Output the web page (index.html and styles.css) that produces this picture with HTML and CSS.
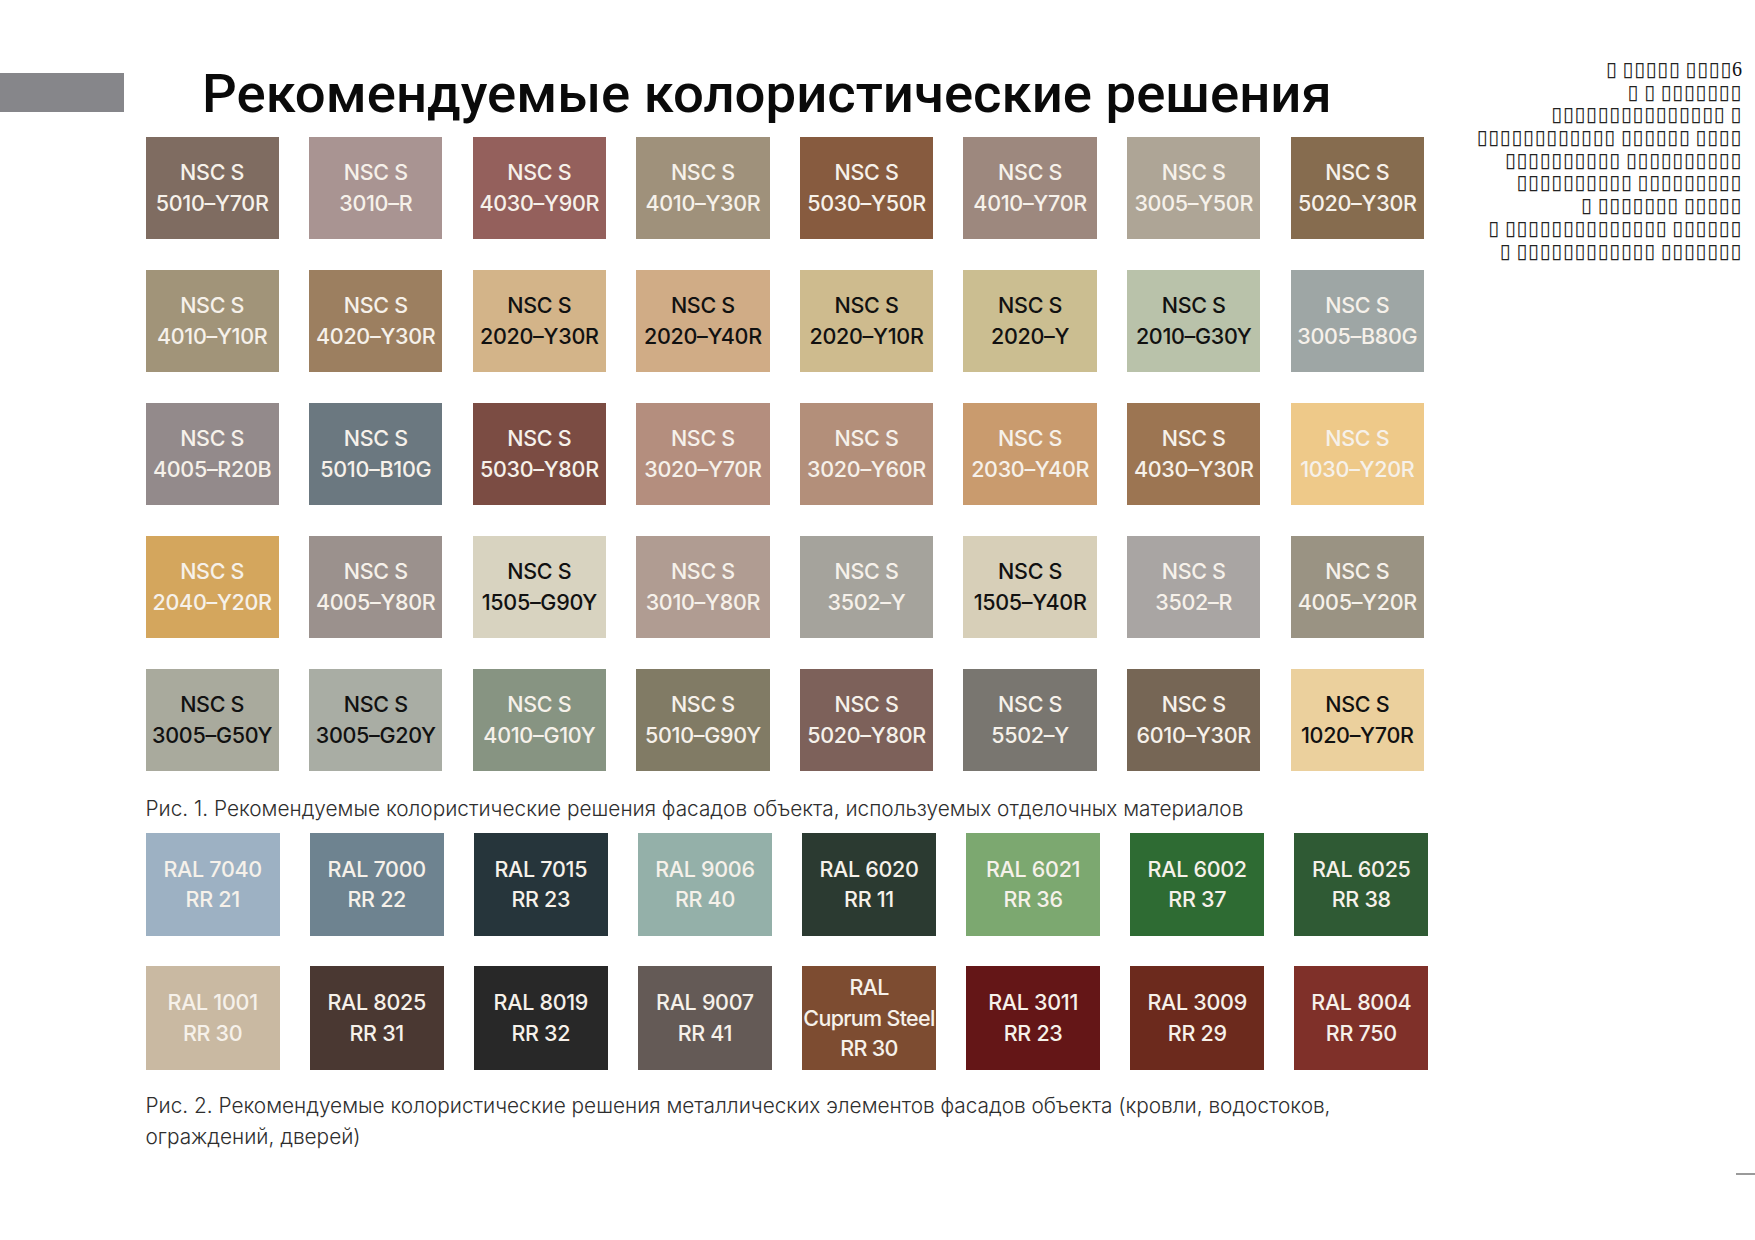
FILE: index.html
```html
<!DOCTYPE html>
<html lang="ru">
<head>
<meta charset="utf-8">
<title>Рекомендуемые колористические решения</title>
<link rel="stylesheet" href="styles.css">
</head>
<body>
<div class="page">
  <div class="main">
    <header class="header">
      <div class="tab"></div>
      <h1 class="title">Рекомендуемые колористические решения</h1>
    </header>

    <div class="grid nsc">
      <div class="sw" style="background:#7f6c61">NSC S<br>5010–Y70R</div>
      <div class="sw" style="background:#a99492">NSC S<br>3010–R</div>
      <div class="sw" style="background:#94605c">NSC S<br>4030–Y90R</div>
      <div class="sw" style="background:#9f917b">NSC S<br>4010–Y30R</div>
      <div class="sw" style="background:#875b3f">NSC S<br>5030–Y50R</div>
      <div class="sw" style="background:#9d887e">NSC S<br>4010–Y70R</div>
      <div class="sw" style="background:#aea596">NSC S<br>3005–Y50R</div>
      <div class="sw" style="background:#866c4f">NSC S<br>5020–Y30R</div>

      <div class="sw" style="background:#a19479">NSC S<br>4010–Y10R</div>
      <div class="sw" style="background:#9c7f60">NSC S<br>4020–Y30R</div>
      <div class="sw dark" style="background:#d3b489">NSC S<br>2020–Y30R</div>
      <div class="sw dark" style="background:#d0ac86">NSC S<br>2020–Y40R</div>
      <div class="sw dark" style="background:#cebb8e">NSC S<br>2020–Y10R</div>
      <div class="sw dark" style="background:#cbbe91">NSC S<br>2020–Y</div>
      <div class="sw dark" style="background:#b9c2aa">NSC S<br>2010–G30Y</div>
      <div class="sw" style="background:#9ea6a5">NSC S<br>3005–B80G</div>

      <div class="sw" style="background:#938a8b">NSC S<br>4005–R20B</div>
      <div class="sw" style="background:#6b7880">NSC S<br>5010–B10G</div>
      <div class="sw" style="background:#7b4c43">NSC S<br>5030–Y80R</div>
      <div class="sw" style="background:#b48e7e">NSC S<br>3020–Y70R</div>
      <div class="sw" style="background:#b38f7a">NSC S<br>3020–Y60R</div>
      <div class="sw" style="background:#c99b6e">NSC S<br>2030–Y40R</div>
      <div class="sw" style="background:#9c7552">NSC S<br>4030–Y30R</div>
      <div class="sw" style="background:#eec989">NSC S<br>1030–Y20R</div>

      <div class="sw" style="background:#d4a65d">NSC S<br>2040–Y20R</div>
      <div class="sw" style="background:#9b918d">NSC S<br>4005–Y80R</div>
      <div class="sw dark" style="background:#d8d3c0">NSC S<br>1505–G90Y</div>
      <div class="sw" style="background:#b09c92">NSC S<br>3010–Y80R</div>
      <div class="sw" style="background:#a5a39c">NSC S<br>3502–Y</div>
      <div class="sw dark" style="background:#d7cfb8">NSC S<br>1505–Y40R</div>
      <div class="sw" style="background:#a9a5a3">NSC S<br>3502–R</div>
      <div class="sw" style="background:#9a9383">NSC S<br>4005–Y20R</div>

      <div class="sw dark" style="background:#a9aa9d">NSC S<br>3005–G50Y</div>
      <div class="sw dark" style="background:#a9ada4">NSC S<br>3005–G20Y</div>
      <div class="sw" style="background:#879482">NSC S<br>4010–G10Y</div>
      <div class="sw" style="background:#817b65">NSC S<br>5010–G90Y</div>
      <div class="sw" style="background:#7d615a">NSC S<br>5020–Y80R</div>
      <div class="sw" style="background:#797670">NSC S<br>5502–Y</div>
      <div class="sw" style="background:#766655">NSC S<br>6010–Y30R</div>
      <div class="sw dark" style="background:#ebd09d">NSC S<br>1020–Y70R</div>
    </div>

    <p class="caption cap1">Рис. 1. Рекомендуемые колористические решения фасадов объекта, используемых отделочных материалов</p>

    <div class="grid ral">
      <div class="sw" style="background:#9db1c3">RAL 7040<br>RR 21</div>
      <div class="sw" style="background:#6e8390">RAL 7000<br>RR 22</div>
      <div class="sw" style="background:#26353b">RAL 7015<br>RR 23</div>
      <div class="sw" style="background:#94b0a9">RAL 9006<br>RR 40</div>
      <div class="sw" style="background:#2b3a31">RAL 6020<br>RR 11</div>
      <div class="sw" style="background:#7ca870">RAL 6021<br>RR 36</div>
      <div class="sw" style="background:#2e6b33">RAL 6002<br>RR 37</div>
      <div class="sw" style="background:#2f5a34">RAL 6025<br>RR 38</div>

      <div class="sw" style="background:#c9b9a2">RAL 1001<br>RR 30</div>
      <div class="sw" style="background:#4a3832">RAL 8025<br>RR 31</div>
      <div class="sw" style="background:#282828">RAL 8019<br>RR 32</div>
      <div class="sw" style="background:#645a56">RAL 9007<br>RR 41</div>
      <div class="sw tight" style="background:#7d4c31">RAL<br>Cuprum Steel<br>RR 30</div>
      <div class="sw" style="background:#641617">RAL 3011<br>RR 23</div>
      <div class="sw" style="background:#6c2a1d">RAL 3009<br>RR 29</div>
      <div class="sw" style="background:#7f3029">RAL 8004<br>RR 750</div>
    </div>

    <p class="caption cap2">Рис. 2. Рекомендуемые колористические решения металлических элементов фасадов объекта (кровли, водостоков, ограждений, дверей)</p>
  </div>

  <aside class="aside">
    <div class="line"><span class="tofu">▯</span> <span class="tofu">▯▯▯▯▯</span> <span class="tofu">▯▯▯▯</span>6</div>
    <div class="line"><span class="tofu">▯</span> <span class="tofu">▯</span> <span class="tofu">▯▯▯▯▯▯▯</span></div>
    <div class="line"><span class="tofu">▯▯▯▯▯▯▯▯▯▯▯▯▯▯▯</span> <span class="tofu">▯</span></div>
    <div class="line"><span class="tofu">▯▯▯▯▯▯▯▯▯▯▯▯</span> <span class="tofu">▯▯▯▯▯▯</span> <span class="tofu">▯▯▯▯</span></div>
    <div class="line"><span class="tofu">▯▯▯▯▯▯▯▯▯▯</span> <span class="tofu">▯▯▯▯▯▯▯▯▯▯</span></div>
    <div class="line"><span class="tofu">▯▯▯▯▯▯▯▯▯▯</span> <span class="tofu">▯▯▯▯▯▯▯▯▯</span></div>
    <div class="line"><span class="tofu">▯</span> <span class="tofu">▯▯▯▯▯▯▯</span> <span class="tofu">▯▯▯▯▯</span></div>
    <div class="line"><span class="tofu">▯</span> <span class="tofu">▯▯▯▯▯▯▯▯▯▯▯▯▯▯</span> <span class="tofu">▯▯▯▯▯▯</span></div>
    <div class="line"><span class="tofu">▯</span> <span class="tofu">▯▯▯▯▯▯▯▯▯▯▯▯</span> <span class="tofu">▯▯▯▯▯▯▯</span></div>
    <div class="rule"></div>
  </aside>
</div>
</body>
</html>
```

FILE: styles.css
```css
html, body {
  margin: 0;
  padding: 0;
  background: #ffffff;
}

.page {
  width: 1755px;
  height: 1240px;
  display: flex;
  overflow: hidden;
}

.main {
  flex: 0 0 1440px;
  display: flex;
  flex-direction: column;
}

.header {
  display: flex;
  align-items: flex-start;
  padding-top: 66px;
  height: 71px;
}

.tab {
  width: 124px;
  height: 39px;
  margin-top: 7px;
  background: #86868a;
  flex: none;
}

.title {
  margin: 0 0 0 78px;
  font-family: Roboto, "Liberation Sans", sans-serif;
  font-weight: 500;
  font-size: 54.5px;
  line-height: 54px;
  color: #0a0a0a;
  white-space: nowrap;
}

.grid {
  display: grid;
  margin-left: 145.5px;
}

.nsc {
  grid-template-columns: repeat(8, 133.3px);
  grid-auto-rows: 102px;
  column-gap: 30.3px;
  row-gap: 31px;
}

.ral {
  grid-template-columns: repeat(8, 134.3px);
  grid-auto-rows: 103.5px;
  column-gap: 29.8px;
  row-gap: 30px;
  margin-top: 9px;
}

.sw {
  display: flex;
  align-items: center;
  justify-content: center;
  text-align: center;
  font-family: Inter, "Noto Sans", sans-serif;
  font-weight: 500;
  font-size: 21.5px;
  line-height: 30.7px;
  color: #f6f1ea;
  letter-spacing: -0.3px;
}

.sw.dark {
  color: #111111;
}

.sw.tight {
  letter-spacing: -0.7px;
  line-height: 30.5px;
}

.caption {
  margin: 0 0 0 145.5px;
  font-family: Inter, "Noto Sans", sans-serif;
  font-weight: 300;
  font-size: 20.8px;
  color: #2e2e2e;
  letter-spacing: 0;
}

.cap1 {
  margin-top: 22.5px;
  line-height: 30px;
}

.cap2 {
  margin-top: 20px;
  line-height: 31px;
  width: 1283px;
}

.aside {
  flex: 1;
  display: flex;
  flex-direction: column;
  align-items: flex-end;
  padding-top: 58px;
  padding-right: 13px;
  font-family: "Liberation Serif", serif;
  font-size: 20px;
  line-height: 22.7px;
  color: #111111;
  text-align: right;
}

.line {
  white-space: nowrap;
  height: 22.7px;
}

.tofu {
  font-family: "DejaVu Sans", sans-serif;
  font-size: 20px;
  letter-spacing: 0.6px;
  color: #222222;
}

.rule {
  width: 19px;
  height: 2px;
  background: #9a9a9a;
  margin-top: 911px;
  margin-right: -13px;
}
```
